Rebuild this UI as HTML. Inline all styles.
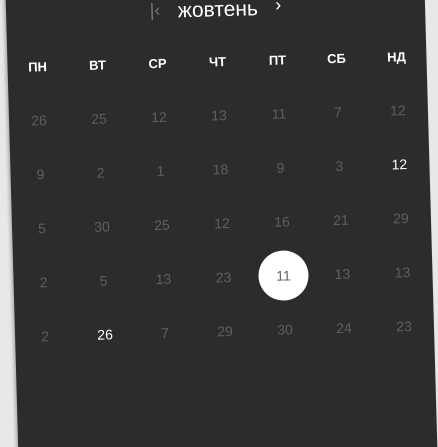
<!DOCTYPE html>
<html><head><meta charset="utf-8"><style>
html,body{margin:0;padding:0;width:438px;height:447px;overflow:hidden;background:#e8e8e8;font-family:"Liberation Sans",sans-serif;}
#wrap{position:absolute;left:0;top:0;width:438px;height:447px;overflow:hidden;}
#card{position:absolute;left:12px;top:-60px;width:419px;height:520px;background:#2c2c2c;transform-origin:219px 283px;transform:rotate(-1.6deg);box-shadow:-2px 0 3px rgba(0,0,0,0.25);}
.t{position:absolute;color:#fff;white-space:nowrap;}
.title{top:58px;left:0;width:419px;text-align:center;font-size:21px;}
.row{position:absolute;left:0;width:419px;height:20px;}
.c{position:absolute;width:60px;text-align:center;font-size:14px;line-height:20px;color:#5f5f5f;}
.h .c{color:#fff;font-weight:bold;font-size:13px;}
.w{color:#fff !important;}
.sel{position:absolute;width:50px;height:50px;border-radius:50%;background:#fff;}
</style></head><body><div id="wrap">
<div id="card">
  <div class="t title"><span style="color:#777;font-size:18px;position:relative;top:-2px">|&lsaquo;</span>&nbsp;&nbsp; жовтень &nbsp;&nbsp;<span style="font-size:18px;position:relative;top:-4px">&rsaquo;</span></div>
  <div class="row h" style="top:112px">
    <div class="c" style="left:0">ПН</div><div class="c" style="left:60px">ВТ</div><div class="c" style="left:120px">СР</div><div class="c" style="left:180px">ЧТ</div><div class="c" style="left:240px">ПТ</div><div class="c" style="left:299px">СБ</div><div class="c" style="left:359px">НД</div>
  </div>
  <div class="row" style="top:165px">
    <div class="c" style="left:0">26</div><div class="c" style="left:60px">25</div><div class="c" style="left:120px">12</div><div class="c" style="left:180px">13</div><div class="c" style="left:240px">11</div><div class="c" style="left:299px">7</div><div class="c" style="left:359px">12</div>
  </div>
  <div class="row" style="top:219px">
    <div class="c" style="left:0">9</div><div class="c" style="left:60px">2</div><div class="c" style="left:120px">1</div><div class="c" style="left:180px">18</div><div class="c" style="left:240px">9</div><div class="c" style="left:299px">3</div><div class="c w" style="left:359px">12</div>
  </div>
  <div class="row" style="top:273px">
    <div class="c" style="left:0">5</div><div class="c" style="left:60px">30</div><div class="c" style="left:120px">25</div><div class="c" style="left:180px">12</div><div class="c" style="left:240px">16</div><div class="c" style="left:299px">21</div><div class="c" style="left:359px">29</div>
  </div>
  <div class="sel" style="left:245px;top:312px"></div>
  <div class="row" style="top:327px">
    <div class="c" style="left:0">2</div><div class="c" style="left:60px">5</div><div class="c" style="left:120px">13</div><div class="c" style="left:180px">23</div><div class="c" style="left:240px;color:#666">11</div><div class="c" style="left:299px">13</div><div class="c" style="left:359px">13</div>
  </div>
  <div class="row" style="top:381px">
    <div class="c" style="left:0">2</div><div class="c w" style="left:60px">26</div><div class="c" style="left:120px">7</div><div class="c" style="left:180px">29</div><div class="c" style="left:240px">30</div><div class="c" style="left:299px">24</div><div class="c" style="left:359px">23</div>
  </div>
</div>
</div></body></html>
